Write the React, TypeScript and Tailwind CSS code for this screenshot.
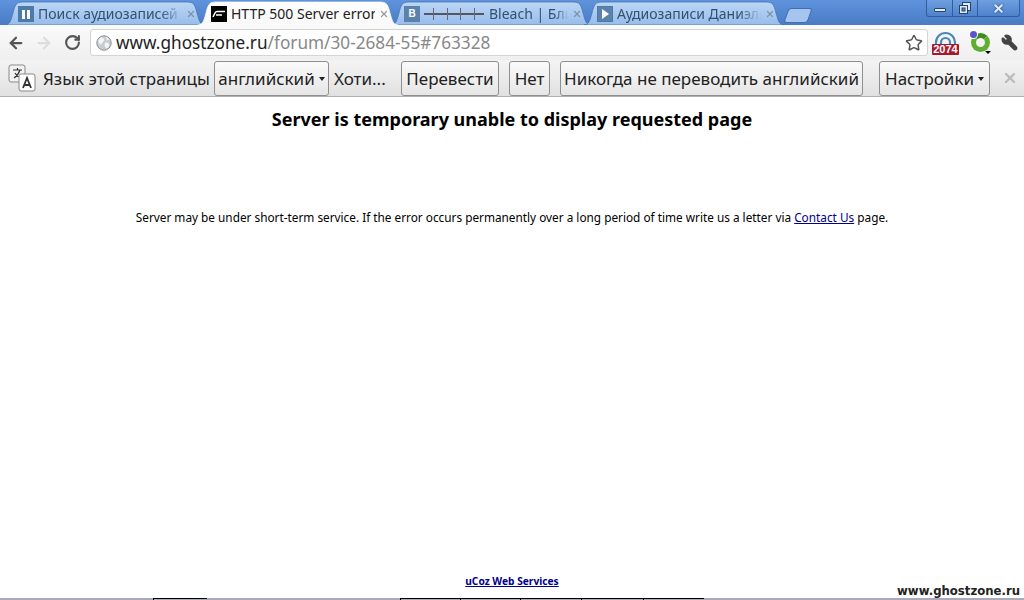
import { Star, X, Wrench, RotateCw, ArrowLeft, ArrowRight } from "lucide-react";

const uiFont = "font-['Noto_Sans','Open_Sans',sans-serif]";

type TabProps = {
  title: string;
  active?: boolean;
  icon: React.ReactNode;
  strike?: boolean;
};

function TabShape({ active }: { active?: boolean }) {
  return (
    <svg className="absolute inset-0 h-full w-full" viewBox="0 0 200 25" preserveAspectRatio="none">
      <defs>
        <linearGradient id="tabOff" x1="0" y1="0" x2="0" y2="1">
          <stop offset="0" stopColor="#bcd6f5" />
          <stop offset="1" stopColor="#97bdeb" />
        </linearGradient>
        <linearGradient id="tabOn" x1="0" y1="0" x2="0" y2="1">
          <stop offset="0" stopColor="#ffffff" />
          <stop offset="1" stopColor="#f8f8f8" />
        </linearGradient>
      </defs>
      <path
        d="M0 25 C5 25 6 20 8 13 C10 5 11 2 18 2 L182 2 C189 2 190 5 192 13 C194 20 195 25 200 25 Z"
        fill={active ? "url(#tabOn)" : "url(#tabOff)"}
        stroke={active ? "#ffffff" : "#3f6fb0"}
        strokeWidth="0.7"
      />
    </svg>
  );
}

function Tab({ title, active, icon, strike }: TabProps) {
  return (
    <div className={`relative -mr-[7px] h-[25px] w-[200px] ${active ? "z-10" : ""}`}>
      <TabShape active={active} />
      <div className="relative flex h-full items-center pl-[13px] pr-[9px] pt-[3px]">
        <span className="mr-[4px] flex h-[16px] w-[16px] shrink-0 items-center justify-center">{icon}</span>
        {strike && (
          <span className="mr-[5px] flex h-[12px] w-[60px] shrink-0 items-center justify-between bg-[linear-gradient(#0000_5px,#556_5px,#556_7px,#0000_7px)] px-[9px]">
            <i className="h-full w-px bg-[#667]" />
            <i className="h-full w-px bg-[#667]" />
            <i className="h-full w-px bg-[#667]" />
            <i className="h-full w-px bg-[#667]" />
          </span>
        )}
        <span
          className={`min-w-0 flex-1 overflow-hidden whitespace-nowrap text-[14px] leading-[18px] ${
            active ? "text-[#222]" : "text-[#33506f] [mask-image:linear-gradient(to_right,#000_85%,transparent)]"
          }`}
        >
          {title}
        </span>
        <X className={`ml-[4px] shrink-0 ${active ? "text-[#999]" : "text-[#7d93ad]"}`} size={10} strokeWidth={3} />
      </div>
    </div>
  );
}

function InfoButton({ children, caret, className = "" }: { children: React.ReactNode; caret?: boolean; className?: string }) {
  return (
    <div
      className={`flex h-[35px] shrink-0 items-center justify-center whitespace-nowrap rounded-[3px] border border-[#8f8f8f] bg-gradient-to-b from-[#fafafa] to-[#e6e6e6] pt-[1px] text-[17px] text-[#222] ${className}`}
    >
      {children}
      {caret && <span className="ml-[4px] h-0 w-0 border-x-[3.5px] border-t-[4px] border-x-transparent border-t-[#222]" />}
    </div>
  );
}

function WindowButtons() {
  return (
    <div className="flex h-[17px] overflow-hidden rounded-b-[3px] border border-t-0 border-[#2f5d9e] bg-gradient-to-b from-[#6f9fe0] to-[#4f82cb]">
      <div className="flex w-[26px] items-center justify-center border-r border-[#2f5d9e]">
        <span className="mt-[3px] h-[4px] w-[12px] rounded-[1px] border border-[#24456f] bg-[#dfeafa]" />
      </div>
      <div className="flex w-[25px] items-center justify-center border-r border-[#2f5d9e]">
        <svg width="12" height="12" viewBox="0 0 12 12" fill="none" stroke="#24456f">
          <rect x="3.5" y="0.5" width="8" height="8" fill="#dfeafa" />
          <rect x="0.5" y="3.5" width="8" height="8" fill="#dfeafa" />
          <rect x="3" y="6" width="3" height="3" fill="#5c8ed6" />
        </svg>
      </div>
      <div className="flex w-[41px] items-center justify-center">
        <X size={13} strokeWidth={3.5} className="text-[#dfeafa] [filter:drop-shadow(0_0_1px_#24456f)]" />
      </div>
    </div>
  );
}

function TranslateIcon() {
  return (
    <svg className="shrink-0" width="28" height="28" viewBox="0 0 28 28">
      <rect x="1" y="1" width="16" height="17" rx="2" fill="#f2f2f2" stroke="#8a8a8a" />
      <path d="M5 6h9M9.5 4v2M6 14c3-2 5-5 6-8M7 9c1 2 3 4 6 5" stroke="#333" strokeWidth="1.2" fill="none" />
      <rect x="11" y="10" width="16" height="17" rx="2" fill="#fff" stroke="#8a8a8a" />
      <path d="M15 24l4-10 4 10M16.5 21h5" stroke="#333" strokeWidth="1.8" fill="none" />
    </svg>
  );
}

function GlobeIcon() {
  return (
    <svg className="shrink-0" width="16" height="16" viewBox="0 0 16 16">
      <circle cx="8" cy="8" r="7.2" fill="#c9cdd1" stroke="#8b8f94" />
      <path d="M4 3c2-1 4 0 4 2S6 7 5.500 9 3 8 2 6zM9 8c2-1 4 0 4 2s-2 4-3 3-2-3-1-5zM10 2c2 0 3 2 3 3l-2 0z" fill="#f4f5f6" />
    </svg>
  );
}

function RssBadge() {
  return (
    <div className="relative h-[24px] w-[27px]">
      <svg className="absolute left-[2px] top-0" width="23" height="16" viewBox="0 0 23 16" fill="none" stroke="#4a86b8" strokeWidth="2.2">
        <path d="M2 16V11.500a9.500 9.500 0 0 1 19 0V16" />
        <path d="M7 16V11.500a4.500 4.500 0 0 1 9 0V16" />
      </svg>
      <span className="absolute bottom-0 left-0 flex h-[11px] w-[27px] items-center justify-center rounded-[1px] bg-[#a8182c] font-['Liberation_Sans',sans-serif] text-[11px] font-bold leading-none text-white">
        2074
      </span>
    </div>
  );
}

function RingIcon() {
  return (
    <div className="relative h-[24px] w-[21px]">
      <span className="absolute left-[1px] top-[2px] h-[19px] w-[19px] rounded-full border-[5px] border-[#5fae32] border-t-[#3d8b1f]" />
      <span className="absolute left-0 top-0 h-[7px] w-[7px] rounded-full bg-[#5a55c8] ring-1 ring-white" />
      <span className="absolute bottom-[1px] right-0 h-0 w-0 border-x-[3px] border-t-[3px] border-x-transparent border-t-black" />
    </div>
  );
}

export default function App() {
  return (
    <div className="relative flex h-[600px] w-[1024px] flex-col overflow-hidden bg-white">
      {/* tab strip */}
      <div className="flex h-[25px] shrink-0 justify-between bg-gradient-to-b from-[#5f93dc] to-[#4a7cc6] pl-[5px] pr-[4px]">
        <div className={`flex items-end ${uiFont}`}>
          <Tab
            title="Поиск аудиозаписей"
            icon={
              <span className="flex h-[16px] w-[16px] items-center justify-center gap-[2px] bg-[#4d7ba8]">
                <i className="h-[9px] w-[3px] bg-white" />
                <i className="h-[9px] w-[3px] bg-white" />
              </span>
            }
          />
          <Tab
            active
            title="HTTP 500 Server error"
            icon={
              <span className="flex h-[16px] w-[16px] items-center justify-center bg-black">
                <svg width="14" height="8" viewBox="0 0 14 8" fill="none" stroke="#fff" strokeWidth="1.6">
                  <path d="M1 7l2-4c.5-1 1-1.500 2-1.500h8M4 5h6" />
                </svg>
              </span>
            }
          />
          <Tab
            title="Bleach | Блич"
            strike
            icon={
              <span className="flex h-[16px] w-[16px] items-center justify-center bg-[#5b82aa] font-['Liberation_Sans',sans-serif] text-[10px] font-bold leading-none text-white">
                B
              </span>
            }
          />
          <Tab
            title="Аудиозаписи Даниэля"
            icon={
              <span className="flex h-[16px] w-[16px] items-center justify-center border border-[#4d7ba8] bg-[#5b82aa]">
                <i className="h-0 w-0 border-y-[5px] border-l-[7px] border-y-transparent border-l-white" />
              </span>
            }
          />
          <div className="mb-[2px] ml-[9px] h-[15px] w-[24px] -skew-x-[20deg] rounded-[3px] border border-[#3f6fb0] bg-[#a5c4ee]" />
        </div>
        <WindowButtons />
      </div>

      {/* toolbar */}
      <div className="flex h-[35px] shrink-0 items-center bg-gradient-to-b from-[#fafafa] to-[#efefef] pl-[7px] pr-[6px]">
        <div className="flex w-[83px] shrink-0 items-center">
          <ArrowLeft size={18} strokeWidth={3} className="text-[#555]" />
          <ArrowRight size={18} strokeWidth={3} className="ml-[10px] text-[#ddd]" />
          <RotateCw size={17} strokeWidth={3} className="ml-[11px] text-[#555]" />
        </div>
        <div className={`flex h-[27px] w-[838px] shrink-0 items-center rounded-[3px] border border-[#d4d4d4] bg-white pl-[5px] pr-[4px] ${uiFont}`}>
          <GlobeIcon />
          <span className="ml-[4px] flex-1 whitespace-nowrap text-[17.2px] leading-none text-[#222]">
            www.ghostzone.ru<span className="text-[#888]">/forum/30-2684-55#763328</span>
          </span>
          <Star size={18} strokeWidth={2} className="text-[#555]" />
        </div>
        <div className="ml-[4px] flex flex-1 items-center justify-between">
          <RssBadge />
          <RingIcon />
          <Wrench size={17} strokeWidth={2.500} className="-scale-x-100 fill-[#444] text-[#444]" />
        </div>
      </div>

      {/* translate bar */}
      <div className={`flex h-[37px] shrink-0 items-center border-b border-[#b0b0b0] bg-gradient-to-b from-[#f4f4f4] to-[#e1e1e1] pl-[8px] ${uiFont}`}>
        <TranslateIcon />
        <span className="ml-[7px] w-[171px] shrink-0 whitespace-nowrap pt-[1px] text-[17px] text-[#222]">Язык этой страницы</span>
        <InfoButton caret className="w-[115px]">английский</InfoButton>
        <span className="ml-[5px] w-[67px] shrink-0 whitespace-nowrap pt-[1px] text-[17px] text-[#222]">Хоти...</span>
        <InfoButton className="w-[98px]">Перевести</InfoButton>
        <InfoButton className="ml-[10px] w-[41px]">Нет</InfoButton>
        <InfoButton className="ml-[10px] w-[303px]">Никогда не переводить английский</InfoButton>
        <InfoButton caret className="ml-[16px] w-[111px]">Настройки</InfoButton>
        <X size={16} strokeWidth={3.5} className="ml-[12px] shrink-0 text-[#bbb]" />
      </div>

      {/* page */}
      <main className="flex min-h-0 flex-1 flex-col items-center font-['Noto_Sans',sans-serif] text-black">
        <h1 className="mt-[10px] text-[18px] font-bold leading-[24px]">Server is temporary unable to display requested page</h1>
        <p className="mt-[78px] whitespace-nowrap text-[11.8px] leading-[16px]">
          Server may be under short-term service. If the error occurs permanently over a long period of time write us a letter via{" "}
          <a className="text-[#00008b] underline">Contact Us</a> page.
        </p>
        <a className="mt-auto mb-[10px] text-[10.2px] font-bold leading-[14px] text-[#00008b] underline">uCoz Web Services</a>
      </main>

      {/* cut-off strip at the bottom edge */}
      <div className="flex h-[2px] shrink-0 bg-[#aab]">
        <i className="ml-[153px] w-[54px] border-l border-t border-black" />
        <i className="ml-[193px] w-[60px] border-l border-t border-black" />
        <i className="w-[60px] border-l border-t border-black" />
        <i className="w-[61px] border-l border-t border-black" />
        <i className="w-[62px] border-l border-t border-black" />
        <i className="w-[61px] border-l border-t border-black" />
      </div>

      <span className="absolute bottom-[2px] right-[4px] font-['DejaVu_Sans',sans-serif] text-[11.7px] font-bold leading-[14px] text-[#222]">
        www.ghostzone.ru
      </span>
    </div>
  );
}
